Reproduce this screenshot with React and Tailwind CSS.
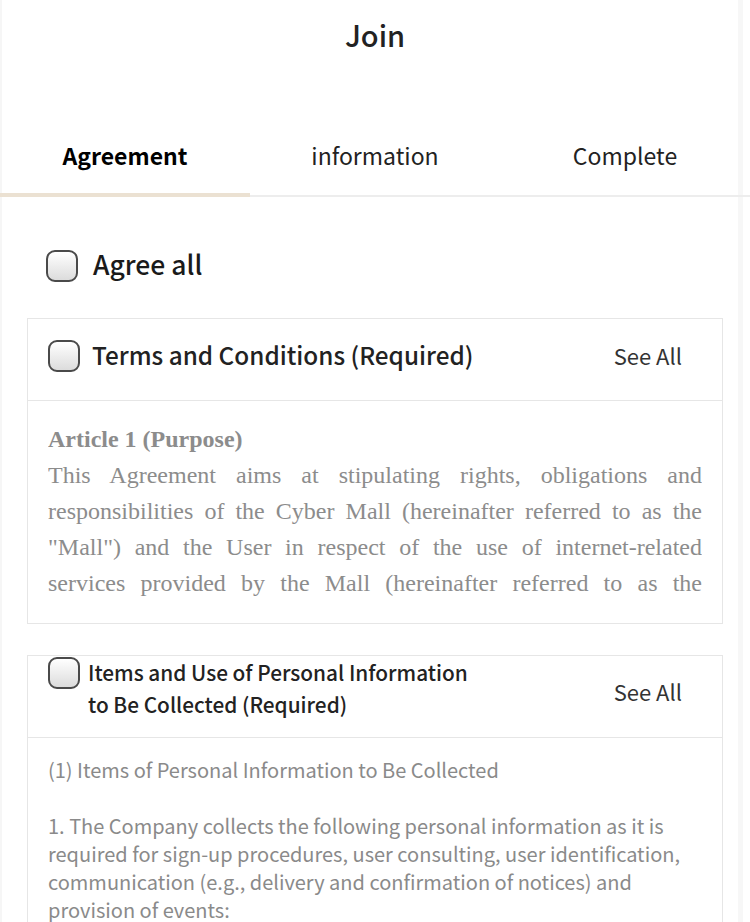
import { useState } from "react";

const sans = { fontFamily: '"Noto Sans CJK KR", "Noto Sans", sans-serif' };

const termsText =
  'This Agreement aims at stipulating rights, obligations and responsibilities of the Cyber Mall (hereinafter referred to as the "Mall") and the User in respect of the use of internet-related services provided by the Mall (hereinafter referred to as the "Services").';

const privacyText = `(1) Items of Personal Information to Be Collected

1. The Company collects the following personal information as it is required for sign-up procedures, user consulting, user identification, communication (e.g., delivery and confirmation of notices) and provision of events:
- Required: name, ID, password, e-mail, mobile phone number`;

function Checkbox({ checked, onChange }) {
  return (
    <button
      type="button"
      onClick={onChange}
      className="flex h-[32px] w-[32px] shrink-0 items-center justify-center rounded-[9px] border-2 border-[#4a4a4a] bg-gradient-to-b from-white to-[#dcdcdc]"
    >
      {checked && (
        <svg viewBox="0 0 24 24" className="h-5 w-5" fill="none" stroke="#333" strokeWidth="3">
          <path d="M5 12l5 5 9-10" />
        </svg>
      )}
    </button>
  );
}

export default function App() {
  const [checks, setChecks] = useState({ terms: false, privacy: false });
  const allChecked = checks.terms && checks.privacy;

  const toggleAll = () => {
    setChecks({ terms: !allChecked, privacy: !allChecked });
  };

  return (
    <div className="relative min-h-screen bg-white text-[#222]" style={sans}>
      {/* faint page edges */}
      <div className="pointer-events-none absolute bottom-0 left-0 top-0 w-[2px] bg-[#f6f6f6]" />
      <div className="pointer-events-none absolute bottom-0 right-[7px] top-0 w-[5px] bg-[#f7f7f7]" />

      <h1 className="pt-[12px] text-center text-[29px] font-medium leading-[44px] text-[#222]">
        Join
      </h1>

      <div className="relative mt-[82px] grid grid-cols-3 border-b-2 border-[#ededed]">
        <div className="relative pb-[23px] text-center text-[23px] font-semibold leading-[34px] text-black">
          Agreement
          <div className="absolute -bottom-[2px] left-0 right-0 h-[4px] bg-[#ebe1d2]" />
        </div>
        <div className="pb-[23px] text-center text-[23px] leading-[34px] text-[#222]">
          information
        </div>
        <div className="pb-[23px] text-center text-[23px] leading-[34px] text-[#222]">
          Complete
        </div>
      </div>

      <div className="relative px-[27px] pt-[51px]">
        <div className="flex items-center gap-[15px] pl-[19px]">
          <Checkbox checked={allChecked} onChange={toggleAll} />
          <span className="-mt-[2px] mb-[2px] text-[26.5px] font-medium leading-[36px] text-[#1a1a1a]">
            Agree all
          </span>
        </div>

        <div className="mt-[34px] border border-[#e6e6e6]">
          <div className="flex h-[82px] items-center justify-between border-b border-[#e6e6e6] pb-[8px] pl-[20px] pr-[40px]">
            <div className="flex items-center gap-[12px]">
              <Checkbox
                checked={checks.terms}
                onChange={() => setChecks({ ...checks, terms: !checks.terms })}
              />
              <span className="-mt-[1px] text-[24.3px] font-medium text-[#222]">Terms and Conditions (Required)</span>
            </div>
            <span className="text-[22px] text-[#333]">See All</span>
          </div>
          <div className="px-[20px] pt-[20px] pb-[22px]">
            <div
              className="h-[180px] overflow-hidden text-justify text-[24px] leading-[36px] text-[#8c8c8c]"
              style={{ fontFamily: '"Liberation Serif", serif' }}
            >
              <p className="font-bold">Article 1 (Purpose)</p>
              <p>{termsText}</p>
            </div>
          </div>
        </div>

        <div className="mt-[31px] border border-[#e6e6e6]">
          <div className="flex h-[82px] justify-between border-b border-[#e6e6e6] pl-[20px] pr-[40px]">
            <div className="flex items-start gap-[8px] pt-[1px]">
              <Checkbox
                checked={checks.privacy}
                onChange={() => setChecks({ ...checks, privacy: !checks.privacy })}
              />
              <span className="-mt-[1px] text-[20.8px] font-medium leading-[32px] text-[#222]">
                Items and Use of Personal Information
                <br />
                to Be Collected (Required)
              </span>
            </div>
            <span className="mb-[10px] self-center text-[22px] text-[#333]">See All</span>
          </div>
          <div className="px-[20px] pt-[18px] pb-[20px]">
            <div className="h-[180px] overflow-hidden whitespace-pre-wrap text-[20px] leading-[28px] text-[#8a8a8a]">
              {privacyText}
            </div>
          </div>
        </div>
      </div>
    </div>
  );
}
